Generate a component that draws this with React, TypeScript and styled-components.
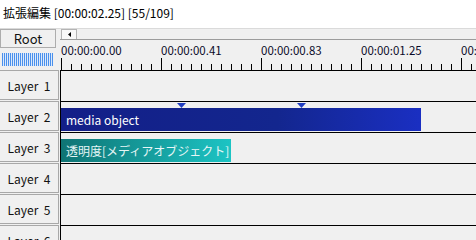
import React from "react";
import styled, { createGlobalStyle } from "styled-components";

const GlobalStyle = createGlobalStyle`
  html, body { margin: 0; padding: 0; background: #f0f0f0; }
  body {
    font-family: "Noto Sans CJK JP", "Noto Sans", sans-serif;
    font-size: 12px;
    color: #000;
  }
`;

const Window = styled.div`
  width: 476px;
  height: 240px;
  overflow: hidden;
  display: flex;
  flex-direction: column;
  background: #f0f0f0;
`;

const TitleBar = styled.div`
  height: 28px;
  box-sizing: content-box;
  background: #ffffff;
  border-bottom: 1px solid #dadada;
  padding-left: 3px;
  line-height: 26px;
  white-space: pre;
  flex-shrink: 0;
`;

const Main = styled.div`
  display: flex;
  flex: 1;
  min-height: 0;
  overflow: hidden;
`;

const LeftPane = styled.div`
  width: 60px;
  flex-shrink: 0;
  display: flex;
  flex-direction: column;
  & > * { flex-shrink: 0; }
`;

const RootButton = styled.div`
  width: 56px;
  height: 19px;
  box-sizing: border-box;
  border: 1px solid #adadad;
  background: #f0f0f0;
  display: flex;
  align-items: center;
  justify-content: center;
  font-size: 13px;
  color: #111;
`;

const Meter = styled.div`
  margin: 5px 0 0 2px;
  width: 51px;
  height: 13px;
  background: repeating-linear-gradient(90deg, #4a90ec 0 1px, #dce9fa 1px 2px);
`;

const LabelList = styled.div`
  margin-top: 4px;
  display: flex;
  flex-direction: column;
  gap: 1px;
`;

const LayerLabel = styled.div`
  width: 59px;
  height: 30px;
  box-sizing: border-box;
  border: 1px solid #a8a8a8;
  border-left: none;
  display: flex;
  align-items: center;
  justify-content: center;
  white-space: pre;
  color: #111;
  flex-shrink: 0;
`;

const TimelinePane = styled.div`
  flex: 1;
  min-width: 0;
  display: flex;
  flex-direction: column;
  & > * { flex-shrink: 0; }
`;

const ScrollRow = styled.div`
  height: 10px;
  display: flex;
  padding-left: 1px;
`;

const ArrowButton = styled.div`
  width: 16px;
  height: 10px;
  box-sizing: border-box;
  border: 1px solid #b4b4b4;
  border-bottom: none;
  background: #f8f8f8;
  display: flex;
  align-items: center;
  justify-content: center;
`;

const Ruler = styled.div`
  height: 30px;
  border-top: 1px solid #9c9c9c;
  display: flex;
  flex-direction: column;
  justify-content: space-between;
  padding-left: 1px;
`;

const RulerLabels = styled.div`
  display: flex;
  padding-top: 3px;
  line-height: 14px;
  font-size: 11.5px;
  color: #0a0a28;
`;

const RulerLabel = styled.span`
  width: 100px;
  flex-shrink: 0;
  white-space: nowrap;
`;

const Rows = styled.div`
  display: flex;
  flex-direction: column;
`;

const LayerRow = styled.div`
  height: 31px;
  flex-shrink: 0;
  box-sizing: border-box;
  border-top: 1px solid #000;
  border-left: 1px solid #000;
  padding-top: 6px;
  display: flex;
  align-items: flex-start;
`;

const Clip = styled.div<{ $kind: "media" | "alpha" }>`
  position: relative;
  height: 23px;
  box-sizing: border-box;
  padding-left: 5px;
  display: flex;
  align-items: center;
  white-space: nowrap;
  color: ${(p) => (p.$kind === "media" ? "#ffffff" : "#e6f6f6")};
  background: ${(p) =>
    p.$kind === "media"
      ? "linear-gradient(90deg, #131f88 0%, #13268e 60%, #1a2fc2 100%)"
      : "linear-gradient(90deg, #0f7474 0%, #1cc4c4 100%)"};
`;

const Marker = styled.svg`
  position: absolute;
  top: -5px;
  width: 9px;
  height: 5px;
`;

const RulerTicks = () => {
  const lines = [];
  for (let i = 0; i < 42; i++) {
    const x = 10 * i + 0.5;
    const major = i % 10 === 0;
    lines.push(
      <line key={i} x1={x} x2={x} y1={major ? 0 : 6} y2={12} stroke="#000" strokeWidth={1} />
    );
  }
  return (
    <svg width={415} height={12} style={{ display: "block" }}>
      {lines}
    </svg>
  );
};

const layers = [1, 2, 3, 4, 5, 6];

export default function App() {
  return (
    <>
      <GlobalStyle />
      <Window>
        <TitleBar>拡張編集 [00:00:02.25] [55/109]</TitleBar>
        <Main>
          <LeftPane>
            <RootButton>Root</RootButton>
            <Meter />
            <LabelList>
              {layers.map((n) => (
                <LayerLabel key={n}>{`Layer  ${n}`}</LayerLabel>
              ))}
            </LabelList>
          </LeftPane>
          <TimelinePane>
            <ScrollRow>
              <ArrowButton>
                <svg width="3" height="5" viewBox="0 0 3 5">
                  <polygon points="3,0 3,5 0,2.5" fill="#000" />
                </svg>
              </ArrowButton>
            </ScrollRow>
            <Ruler>
              <RulerLabels>
                <RulerLabel>00:00:00.00</RulerLabel>
                <RulerLabel>00:00:00.41</RulerLabel>
                <RulerLabel>00:00:00.83</RulerLabel>
                <RulerLabel>00:00:01.25</RulerLabel>
                <RulerLabel>00:00:01.66</RulerLabel>
              </RulerLabels>
              <RulerTicks />
            </Ruler>
            <Rows>
              {layers.map((n) => (
                <LayerRow key={n}>
                  {n === 2 && (
                    <Clip $kind="media" style={{ width: 360 }}>
                      media object
                      <Marker viewBox="0 0 9 5" style={{ left: 116 }}>
                        <polygon points="0,0 9,0 4.5,5" fill="#1f3cc0" />
                      </Marker>
                      <Marker viewBox="0 0 9 5" style={{ left: 236 }}>
                        <polygon points="0,0 9,0 4.5,5" fill="#1f3cc0" />
                      </Marker>
                    </Clip>
                  )}
                  {n === 3 && (
                    <Clip $kind="alpha" style={{ width: 170 }}>
                      透明度[メディアオブジェクト]
                    </Clip>
                  )}
                </LayerRow>
              ))}
            </Rows>
          </TimelinePane>
        </Main>
      </Window>
    </>
  );
}
